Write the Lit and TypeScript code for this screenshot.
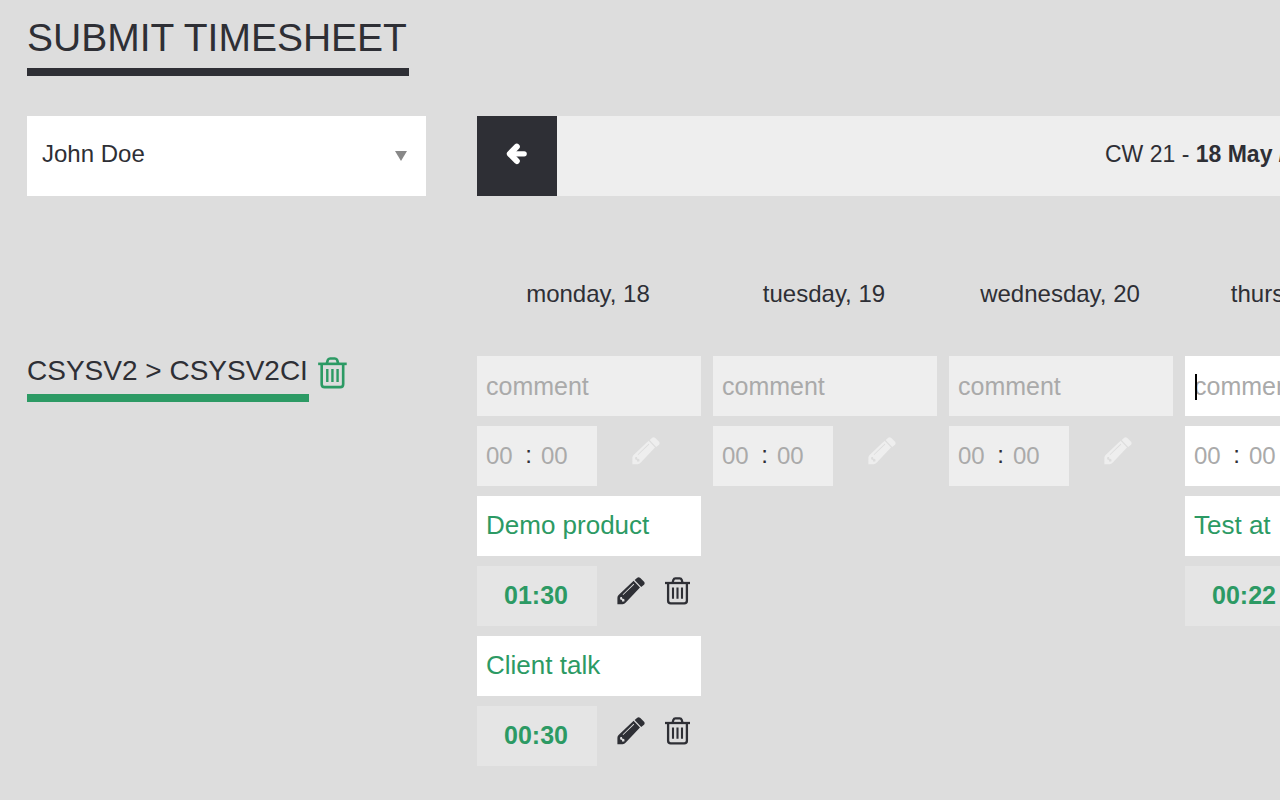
import { LitElement, html, css, svg, nothing } from "lit";
import { customElement, state } from "lit/decorators.js";
import { classMap } from "lit/directives/class-map.js";

interface Entry {
  comment: string;
  time: string;
}

interface Day {
  name: string;
  active?: boolean;
  entries: Entry[];
}

const DAYS: Day[] = [
  {
    name: "monday, 18",
    entries: [
      { comment: "Demo product", time: "01:30" },
      { comment: "Client talk", time: "00:30" },
    ],
  },
  { name: "tuesday, 19", entries: [] },
  { name: "wednesday, 20", entries: [] },
  { name: "thursday, 21", active: true, entries: [{ comment: "Test at", time: "00:22" }] },
];

const trashIcon = html`<svg class="trash" viewBox="0 0 26 28" aria-hidden="true">
  ${svg`<g fill="none" stroke="currentColor" stroke-width="2.3">
    <path d="M0 6H25" />
    <path d="M7.6 5.8L8.4 2.8Q8.9 1.3 10.4 1.3H14.7Q16.2 1.3 16.7 2.8L17.5 5.8" />
    <path d="M3.1 6V23.8Q3.1 26.4 5.7 26.4H19.3Q21.9 26.4 21.9 23.8V6" />
    <path stroke-width="2.1" d="M8 10.5V21.8M12.5 10.5V21.8M17 10.5V21.8" />
  </g>`}
</svg>`;

const pencilIcon = html`<svg class="pencil" viewBox="0 0 28 28" aria-hidden="true">
  ${svg`<path fill="currentColor" fill-rule="evenodd"
    d="M16.6 3.8L23 10.6L8.8 25.6Q7.4 27.2 5.6 27.2H0.4V20.8Q0.4 19.2 1.6 18.1ZM5.6 17.4L6.2 18L17.2 7.4L16.6 6.8ZM3.4 20L3 22.2L4.8 23L5.4 24.8L7.6 24.2L7.2 22L5.4 21.8L4.9 20Z" />
  <path fill="currentColor"
    d="M17.6 3L20 0.9Q21.6 -0.4 23.3 1.1L26.8 4.5Q28.4 6.1 27 7.8L24.2 10Z" />`}
</svg>`;

const arrowIcon = html`<svg class="arrow" viewBox="0 0 22 22" aria-hidden="true">
  ${svg`<g stroke="currentColor" stroke-linecap="round" stroke-linejoin="round">
    <path d="M10.8 3.7L3.8 10.8L10.8 18" fill="none" stroke-width="6" />
    <path d="M4 10.8H18.2" fill="none" stroke-width="5.2" />
  </g>`}
</svg>`;

@customElement("app-root")
export class AppRoot extends LitElement {
  @state() private days = DAYS;

  static styles = css`
    :host {
      display: block;
      min-height: 100vh;
      box-sizing: border-box;
      padding: 16px 0 34px 27px;
      overflow: hidden;
      background: #dddddd;
      color: #2e2f35;
      font: 24px/30px "Liberation Sans", Arial, sans-serif;
      --dark: #2e2f35;
      --green: #2c9a64;
    }
    *, *::before { box-sizing: border-box; }
    button, input, select {
      font: inherit;
      color: inherit;
      border: 0;
      margin: 0;
      padding: 0;
      background: none;
      border-radius: 0;
      outline: none;
    }
    button { cursor: pointer; display: flex; }
    svg { display: block; }
    h1 {
      width: fit-content;
      margin: 0 0 40px;
      padding: 0 2px 8px 0;
      border-bottom: 8px solid var(--dark);
      font-size: 39px;
      line-height: 44px;
      font-weight: 400;
    }
    .layout {
      display: grid;
      grid-template-columns: 399px max-content;
      column-gap: 51px;
    }
    .person { position: relative; height: 80px; }
    .person select {
      width: 100%;
      height: 100%;
      padding: 0 40px 4px 15px;
      appearance: none;
      background: #ffffff;
    }
    .person svg {
      position: absolute;
      right: 19px;
      top: 35px;
      width: 12px;
      height: 10px;
      pointer-events: none;
      fill: #888888;
    }
    .week { display: flex; height: 80px; background: #eeeeee; min-width: 1640px; }
    .previous {
      width: 80px;
      align-items: center;
      justify-content: center;
      padding-bottom: 4px;
      background: var(--dark);
      color: #ffffff;
    }
    .arrow { width: 22px; height: 22px; }
    .range { padding: 23px 0 0 548px; font-size: 23px; white-space: pre; }
    .project { display: flex; gap: 9px; margin-top: 160px; align-items: flex-start; }
    h2 {
      margin: 0;
      padding: 0 1px 8px 0;
      border-bottom: 8px solid var(--green);
      font-size: 28px;
      line-height: 30px;
      font-weight: 400;
    }
    .project button { margin-top: 1px; color: var(--green); }
    .project .trash { width: 30px; height: 32px; }
    .days { display: grid; grid-auto-flow: column; grid-auto-columns: 224px; gap: 12px; margin-top: 83px; justify-content: start; }
    .day { display: grid; gap: 10px; align-content: start; }
    .name { margin-bottom: 37px; padding-right: 2px; text-align: center; }
    .comment {
      position: relative;
      height: 60px;
      background: #eeeeee;
      font-size: 25px;
    }
    .comment input { width: 100%; height: 100%; padding: 0 9px; }
    input::placeholder { color: #aaaaaa; opacity: 1; }
    .caret { position: absolute; left: 10px; top: 18px; width: 2px; height: 26px; background: #000000; }
    .row { display: flex; align-items: flex-start; height: 60px; }
    .time { display: flex; align-items: center; width: 120px; height: 60px; padding-left: 9px; background: #eeeeee; }
    .time input { width: 28px; height: 60px; }
    .colon { width: 27px; padding: 0 0 2px 2px; text-align: center; }
    .active .comment, .active .time { background: #ffffff; }
    .row button { margin-top: 11px; }
    .row .pencil { width: 28px; height: 28px; }
    .row .trash { width: 26px; height: 28px; }
    .add { margin-left: 35px; color: #eeeeee; }
    .edit { margin-left: 20px; }
    .remove { margin-left: 20px; }
    .text { height: 60px; padding: 14px 9px; background: #ffffff; color: var(--green); font-size: 26px; }
    .spent {
      width: 120px;
      height: 60px;
      padding: 14px 2px 0 0;
      text-align: center;
      background: #e5e5e5;
      color: var(--green);
      font-size: 25px;
      font-weight: 700;
    }
  `;

  private renderDay(day: Day) {
    return html`<section class=${classMap({ day: true, active: !!day.active })}>
      <div class="name">${day.name}</div>
      <div class="comment">
        <input type="text" placeholder="comment" aria-label="Comment for ${day.name}" />
        ${day.active ? html`<span class="caret"></span>` : nothing}
      </div>
      <div class="row">
        <div class="time">
          <input type="text" placeholder="00" maxlength="2" aria-label="Hours for ${day.name}" />
          <span class="colon">:</span>
          <input type="text" placeholder="00" maxlength="2" aria-label="Minutes for ${day.name}" />
        </div>
        <button class="add" aria-label="Add entry">${pencilIcon}</button>
      </div>
      ${day.entries.map(
        (entry) => html`<div class="text">${entry.comment}</div>
          <div class="row">
            <div class="spent">${entry.time}</div>
            <button class="edit" aria-label="Edit entry">${pencilIcon}</button>
            <button class="remove" aria-label="Delete entry">${trashIcon}</button>
          </div>`
      )}
    </section>`;
  }

  render() {
    return html`
      <h1>SUBMIT TIMESHEET</h1>
      <main class="layout">
        <div>
          <div class="person">
            <select aria-label="Employee"><option>John Doe</option></select>
            <svg viewBox="0 0 12 10" aria-hidden="true"><path d="M0 0H12L6 10Z" /></svg>
          </div>
          <div class="project">
            <h2>CSYSV2 &gt; CSYSV2CI</h2>
            <button aria-label="Delete project">${trashIcon}</button>
          </div>
        </div>
        <div>
          <div class="week">
            <button class="previous" aria-label="Previous week">${arrowIcon}</button>
            <div class="range">CW 21 - <b>18 May / 24 May</b></div>
          </div>
          <div class="days">${this.days.map((day) => this.renderDay(day))}</div>
        </div>
      </main>
    `;
  }
}
